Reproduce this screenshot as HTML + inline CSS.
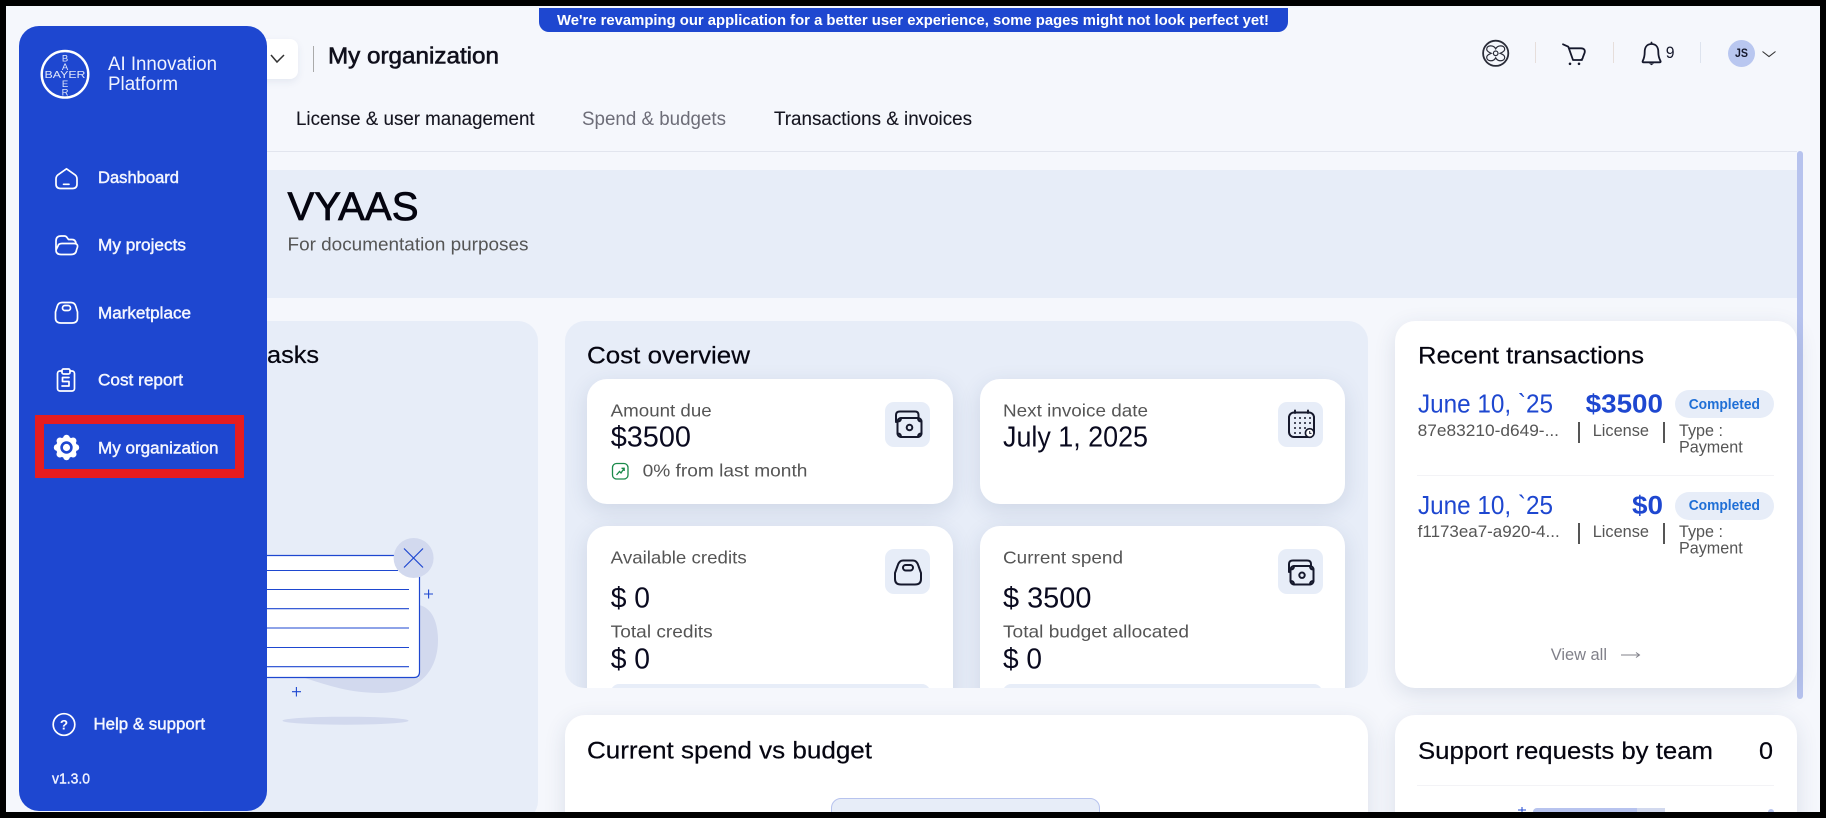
<!DOCTYPE html>
<html lang="en"><head><meta charset="utf-8"><title>My organization</title>
<style>
html,body{margin:0;padding:0;background:#000;overflow:hidden}
#p{position:relative;width:1826px;height:818px;background:#f5f7fc;overflow:hidden;font-family:"Liberation Sans",sans-serif}
#p div{position:absolute;box-sizing:border-box}
.w{background:#fff;border-radius:20px;box-shadow:0 6px 22px rgba(40,60,110,.13)}
.l{background:#e7edf8}
.ib{background:#e7edf8;border-radius:9px;width:45px;height:45px}
svg{position:absolute;left:0;top:0}
text{font-family:"Liberation Sans",sans-serif}
.nav{font-size:17px;fill:#f4f6ff;stroke:#f4f6ff;stroke-width:.45}
.h{font-size:24.2px;fill:#050510;stroke:#050510;stroke-width:.2}
.lab{font-size:17.5px;fill:#555}
.val{font-size:29px;fill:#0a0a1f}
.blu{font-size:25.8px;fill:#1e47d0}
.sm{font-size:16.5px;fill:#555}
.tab{font-size:19px;fill:#151520;stroke:#151520;stroke-width:.12}
.ic{fill:none;stroke:#15182c;stroke-width:2;stroke-linecap:round;stroke-linejoin:round}
.sb{fill:none;stroke:#fff;stroke-width:1.7;stroke-linecap:round;stroke-linejoin:round}
</style></head><body>
<div id="p">
 <div style="left:539px;top:8px;width:749px;height:24px;background:#1e47d0;border-radius:0 0 10px 10px"></div>
 <div style="left:230px;top:39px;width:68px;height:40px;background:#fff;border-radius:8px;box-shadow:0 3px 8px rgba(40,60,110,.08)"></div>
 <div style="left:313px;top:46px;width:1px;height:26px;background:#aaa"></div>
 <div style="left:267px;top:151px;width:1530px;height:1px;background:#e2e5ee"></div>
 <div class="l" style="left:267px;top:170px;width:1530px;height:128px"></div>
 <div style="left:1797px;top:151px;width:6px;height:548px;background:#b7c3ee;border-radius:3px"></div>
 <div class="l" style="left:200px;top:321px;width:338px;height:500px;border-radius:20px"></div>

 <div class="l" style="left:565px;top:321px;width:803px;height:367px;border-radius:20px;overflow:hidden">
  <div class="w" style="left:22px;top:58px;width:366px;height:125px"></div>
  <div class="w" style="left:415px;top:58px;width:365px;height:125px"></div>
  <div class="w" style="left:22px;top:205px;width:366px;height:200px"></div>
  <div class="w" style="left:415px;top:205px;width:365px;height:200px"></div>
  <div class="ib" style="left:320px;top:81px"></div>
  <div class="ib" style="left:713px;top:81px"></div>
  <div class="ib" style="left:320px;top:228px"></div>
  <div class="ib" style="left:713px;top:228px"></div>
  <div class="l" style="left:46px;top:363px;width:319px;height:20px;border-radius:8px 8px 0 0"></div>
  <div class="l" style="left:438px;top:363px;width:319px;height:20px;border-radius:8px 8px 0 0"></div>
 </div>

 <div class="w" style="left:1395px;top:321px;width:402px;height:367px"></div>
 <div class="w" style="left:565px;top:715px;width:803px;height:130px"></div>
 <div class="w" style="left:1395px;top:715px;width:402px;height:130px"></div>
 <div class="l" style="left:831px;top:798px;width:269px;height:30px;border:1px solid #b7c3ee;border-radius:10px"></div>
 <div style="left:1417px;top:475px;width:357px;height:1px;background:#f3f3f6"></div>
 <div style="left:1417px;top:785px;width:357px;height:1px;background:#f3f3f6"></div>
 <div style="left:1533px;top:808px;width:104px;height:5px;background:#b7c3ee;border-radius:4px 0 0 0"></div>
 <div style="left:1637px;top:808px;width:28px;height:5px;background:#d2d9ee"></div>
 <div style="left:1675px;top:390px;width:99px;height:28px;background:#e7edf8;border-radius:14px"></div>
 <div style="left:1675px;top:492px;width:99px;height:28px;background:#e7edf8;border-radius:14px"></div>
 <div style="left:1578px;top:422px;width:2px;height:21px;background:#555"></div>
 <div style="left:1663px;top:422px;width:2px;height:21px;background:#555"></div>
 <div style="left:1578px;top:523px;width:2px;height:21px;background:#555"></div>
 <div style="left:1663px;top:523px;width:2px;height:21px;background:#555"></div>
 <div style="left:1535px;top:42px;width:1px;height:21px;background:#e6dedb"></div>
 <div style="left:1613px;top:42px;width:1px;height:21px;background:#e6dedb"></div>
 <div style="left:1700px;top:42px;width:1px;height:21px;background:#dde3ee"></div>
 <div style="left:1728px;top:40px;width:27px;height:27px;border-radius:50%;background:#b9c7f0"></div>

 <!-- illustration -->
 <svg width="1826" height="818" viewBox="0 0 1826 818">
  <path d="M419 605C433 608 438 624 438 640C438 670 420 693 380 693C350 693 330 686 305 678H419Z" fill="#d2d9ee"/>
  <ellipse cx="345.5" cy="720.7" rx="63" ry="4" fill="#d2d9ee"/>
  <path d="M230 555.5H414Q419.5 555.5 419.5 561V672Q419.5 677.5 414 677.5H230Z" fill="#fff" stroke="#1e47d0" stroke-width="1.2"/>
  <g stroke="#1e47d0" stroke-width="1.1">
   <path d="M230 570.5H398M230 589.5H409M230 608.7H409M230 628H409M230 647.5H409M230 666.7H409"/>
   <path d="M424 594H433M428.6 589.5V598.5M292 691.7H301M296.4 687V696.5"/>
  </g>
  <circle cx="413.6" cy="558" r="20" fill="#d2d9ee"/>
  <path d="M404 548.5L423 567.5M423 548.5L404 567.5" stroke="#1e47d0" stroke-width="1.2"/>
 </svg>

 <div style="left:19px;top:26px;width:248px;height:785px;background:#1e47d0;border-radius:20px"></div>
 <div style="left:35px;top:415px;width:209px;height:63px;border:9px solid #e51c1f"></div>

 <svg width="1826" height="818" viewBox="0 0 1826 818">
  <!-- banner -->
  <text x="557" y="25" textLength="712" lengthAdjust="spacingAndGlyphs" font-size="15" font-weight="700" fill="#fff">We're revamping our application for a better user experience, some pages might not look perfect yet!</text>
  <!-- top -->
  <path d="M271 55L277 62L284 55" fill="none" stroke="#333" stroke-width="1.5"/>
  <text x="328" y="63.3" textLength="171" lengthAdjust="spacingAndGlyphs" font-size="23" fill="#10101c" stroke="#10101c" stroke-width=".6">My organization</text>
  <text x="296" y="125" textLength="238.6" lengthAdjust="spacingAndGlyphs" class="tab">License &amp; user management</text>
  <text x="582" y="125" textLength="144" lengthAdjust="spacingAndGlyphs" class="tab" style="fill:#6d6d78;stroke:none">Spend &amp; budgets</text>
  <text x="774" y="125" textLength="198" lengthAdjust="spacingAndGlyphs" class="tab">Transactions &amp; invoices</text>
  <!-- top-right icons -->
  <g fill="none" stroke="#2a2c38">
   <circle cx="1495.7" cy="53.3" r="12.6" stroke-width="1.8"/>
   <circle cx="1495.7" cy="53.3" r="2.3" stroke-width="1.2"/>
   <path d="M1495.7 48.8c2-4 9-4 9 .5c0 2-2 3-4.5 4c2.5 1 4.5 2 4.5 4c0 4.5-7 4.5-9 .5c-2 4-9 4-9-.5c0-2 2-3 4.5-4c-2.5-1-4.5-2-4.5-4c0-4.5 7-4.5 9-.5z" stroke-width="1.2"/>
  </g>
  <path class="ic" style="stroke-width:1.8" d="M1563 44.3L1568.3 46.7L1573 60H1582M1569.3 48.3H1581Q1585.5 48.5 1584.7 52.5L1583 57Q1582.5 60 1580 60"/>
  <circle cx="1570" cy="63.8" r="1.3" fill="#15182c"/><circle cx="1579" cy="63.8" r="1.3" fill="#15182c"/>
  <path class="ic" style="stroke-width:1.8" d="M1651.5 44C1646 44 1644.7 48.5 1644.7 52C1644.7 57 1643.5 59.5 1642.7 61Q1642.3 62.3 1643.5 62.3H1659.8Q1661 62.3 1660.5 61C1659.7 59.5 1658.3 57 1658.3 52C1658.3 48.5 1657 44 1651.5 44ZM1651.5 42.5V44"/>
  <path d="M1649 63.5H1654L1651.5 65.2Z" fill="#15182c"/>
  <text x="1665.7" y="58" textLength="8.8" lengthAdjust="spacingAndGlyphs" font-size="16.5" fill="#15182c">9</text>
  <text x="1735" y="57.2" textLength="13" lengthAdjust="spacingAndGlyphs" font-size="11.5" font-weight="700" fill="#15182c">JS</text>
  <path d="M1762.5 51.5L1769 56.5L1775.5 51.5" fill="none" stroke="#333" stroke-width="1.1"/>
  <!-- hero -->
  <text x="287.5" y="220" textLength="131" lengthAdjust="spacingAndGlyphs" font-size="40" fill="#050510" stroke="#050510" stroke-width=".8">VYAAS</text>
  <text x="287.5" y="250.7" textLength="241" lengthAdjust="spacingAndGlyphs" font-size="18" fill="#555">For documentation purposes</text>
  <text x="267" y="363" textLength="52" lengthAdjust="spacingAndGlyphs" class="h">asks</text>
  <!-- cost overview -->
  <text x="587" y="363.3" textLength="163" lengthAdjust="spacingAndGlyphs" class="h">Cost overview</text>
  <text x="610.7" y="416.7" textLength="101" lengthAdjust="spacingAndGlyphs" class="lab">Amount due</text>
  <text x="610.7" y="446.7" textLength="80.3" lengthAdjust="spacingAndGlyphs" class="val">$3500</text>
  <text x="642.6" y="476.7" textLength="164.8" lengthAdjust="spacingAndGlyphs" class="lab">0% from last month</text>
  <rect x="612.5" y="463.5" width="15.5" height="15.5" rx="4" fill="none" stroke="#1a8a4a" stroke-width="1.3"/>
  <path d="M616.5 475L619.5 471.5L621 473L624 468.5M621.5 468.3H624.2V471" fill="none" stroke="#1a8a4a" stroke-width="1.3"/>
  <text x="1003" y="416.7" textLength="145" lengthAdjust="spacingAndGlyphs" class="lab">Next invoice date</text>
  <text x="1003" y="446.7" textLength="145" lengthAdjust="spacingAndGlyphs" class="val">July 1, 2025</text>
  <text x="610.7" y="563.3" textLength="136" lengthAdjust="spacingAndGlyphs" class="lab">Available credits</text>
  <text x="610.7" y="607.3" textLength="39.3" lengthAdjust="spacingAndGlyphs" class="val">$ 0</text>
  <text x="610.7" y="637.3" textLength="102" lengthAdjust="spacingAndGlyphs" class="lab">Total credits</text>
  <text x="610.7" y="668.3" textLength="39.3" lengthAdjust="spacingAndGlyphs" class="val">$ 0</text>
  <text x="1003" y="563.3" textLength="120" lengthAdjust="spacingAndGlyphs" class="lab">Current spend</text>
  <text x="1003" y="607.3" textLength="88.4" lengthAdjust="spacingAndGlyphs" class="val">$ 3500</text>
  <text x="1003" y="637.3" textLength="186" lengthAdjust="spacingAndGlyphs" class="lab">Total budget allocated</text>
  <text x="1003" y="668.3" textLength="39" lengthAdjust="spacingAndGlyphs" class="val">$ 0</text>
  <!-- card icons -->
  <g class="ic">
   <path d="M896 422V415Q896 411.5 900 411.5H915Q918.5 411.5 918.5 415V418"/>
   <rect x="897.5" y="418" width="24" height="19" rx="3.5"/>
   <circle cx="909.5" cy="427.5" r="2.8"/>
   <path d="M897.5 421.5Q901 421.5 901 418M918 418Q918 421.5 921.5 421.5M897.5 433.5Q901 433.5 901 437M921.5 433.5Q918 433.5 918 437"/>
  </g>
  <g class="ic">
   <path d="M1289 572V564Q1289 560.5 1293 560.5H1307Q1311 560.5 1311 564V566"/>
   <rect x="1290.5" y="566" width="23" height="18.5" rx="3.5"/>
   <circle cx="1302" cy="575.2" r="2.7"/>
   <path d="M1290.5 569.5Q1294 569.5 1294 566M1310 566Q1310 569.5 1313.5 569.5M1290.5 581Q1294 581 1294 584.5M1313.5 581Q1310 581 1310 584.5"/>
  </g>
  <g class="ic">
   <rect x="1289" y="412.5" width="25" height="24.5" rx="5"/>
   <path d="M1295 410.5V413M1308 410.5V413"/>
  </g>
  <g fill="#15182c">
   <circle cx="1295" cy="418" r="1"/><circle cx="1300" cy="418" r="1"/><circle cx="1305" cy="418" r="1"/><circle cx="1310" cy="418" r="1"/>
   <circle cx="1295" cy="423" r="1"/><circle cx="1300" cy="423" r="1"/><circle cx="1305" cy="423" r="1"/><circle cx="1310" cy="423" r="1"/>
   <circle cx="1295" cy="428" r="1"/><circle cx="1300" cy="428" r="1"/><circle cx="1305" cy="428" r="1"/>
   <circle cx="1295" cy="433" r="1"/><circle cx="1300" cy="433" r="1"/>
  </g>
  <circle cx="1309.7" cy="433" r="4.3" fill="#fff" stroke="#15182c" stroke-width="1.7"/>
  <path d="M1309.7 431V433.4H1311.5" fill="none" stroke="#15182c" stroke-width="1"/>
  <g class="ic">
   <path d="M903 560.5H913Q917 560.5 918.5 566L921 573V579Q921 584.5 915 584.5H901Q895 584.5 895 579V573L897.5 566Q899 560.5 903 560.5Z"/>
   <rect x="903" y="565" width="10" height="5.5" rx="2.7"/>
  </g>
  <!-- lower titles -->
  <text x="587" y="758.3" textLength="285" lengthAdjust="spacingAndGlyphs" class="h">Current spend vs budget</text>
  <text x="1418" y="759" textLength="295" lengthAdjust="spacingAndGlyphs" class="h">Support requests by team</text>
  <text x="1759" y="759" textLength="14" lengthAdjust="spacingAndGlyphs" class="h">0</text>
  <path d="M1518 810H1526M1522 807V812" stroke="#1e47d0"/>
  <circle cx="1771" cy="812" r="3" fill="#b7c3ee"/>
  <!-- recent transactions -->
  <text x="1418" y="363.3" textLength="226" lengthAdjust="spacingAndGlyphs" class="h">Recent transactions</text>
  <text x="1418" y="412.7" textLength="135" lengthAdjust="spacingAndGlyphs" class="blu">June 10, `25</text>
  <text x="1585.7" y="412.7" textLength="77.3" lengthAdjust="spacingAndGlyphs" class="blu" font-weight="700">$3500</text>
  <text x="1688.7" y="409" textLength="71.3" lengthAdjust="spacingAndGlyphs" font-size="14.5" font-weight="700" fill="#1f6fd6">Completed</text>
  <text x="1417.7" y="436" textLength="141.3" lengthAdjust="spacingAndGlyphs" class="sm">87e83210-d649-...</text>
  <text x="1592.7" y="436" textLength="56.3" lengthAdjust="spacingAndGlyphs" class="sm">License</text>
  <text x="1679" y="436" textLength="44" lengthAdjust="spacingAndGlyphs" class="sm">Type :</text>
  <text x="1679" y="452.7" textLength="63.7" lengthAdjust="spacingAndGlyphs" class="sm">Payment</text>
  <text x="1418" y="514" textLength="135" lengthAdjust="spacingAndGlyphs" class="blu">June 10, `25</text>
  <text x="1632" y="514" textLength="31" lengthAdjust="spacingAndGlyphs" class="blu" font-weight="700">$0</text>
  <text x="1688.7" y="510" textLength="71.3" lengthAdjust="spacingAndGlyphs" font-size="14.5" font-weight="700" fill="#1f6fd6">Completed</text>
  <text x="1417.7" y="537" textLength="142" lengthAdjust="spacingAndGlyphs" class="sm">f1173ea7-a920-4...</text>
  <text x="1592.7" y="537" textLength="56.3" lengthAdjust="spacingAndGlyphs" class="sm">License</text>
  <text x="1679" y="537" textLength="44" lengthAdjust="spacingAndGlyphs" class="sm">Type :</text>
  <text x="1679" y="553.3" textLength="63.7" lengthAdjust="spacingAndGlyphs" class="sm">Payment</text>
  <text x="1550.7" y="660" textLength="56.3" lengthAdjust="spacingAndGlyphs" font-size="16.5" fill="#808089">View all</text>
  <path d="M1621 655H1639.5M1636 652.5L1639.5 655L1636 657.5" fill="none" stroke="#808089" stroke-width="1"/>
  <!-- sidebar content -->
  <circle cx="65" cy="74.3" r="23.3" fill="none" stroke="#fff" stroke-width="2.4"/>
  <g fill="#dfe6fa" font-size="9.5" text-anchor="middle">
   <text x="65" y="78" font-size="10" textLength="41" lengthAdjust="spacingAndGlyphs">BAYER</text>
   <text x="65" y="61.5">B</text><text x="65" y="70">A</text><text x="65" y="87">E</text><text x="65" y="95.5">R</text>
  </g>
  <text x="108" y="70" textLength="109" lengthAdjust="spacingAndGlyphs" font-size="19" fill="#f0f3ff">AI Innovation</text>
  <text x="108" y="90" textLength="70" lengthAdjust="spacingAndGlyphs" font-size="19" fill="#f0f3ff">Platform</text>
  <text x="98" y="183" textLength="81" lengthAdjust="spacingAndGlyphs" class="nav">Dashboard</text>
  <text x="98" y="250.7" textLength="88" lengthAdjust="spacingAndGlyphs" class="nav">My projects</text>
  <text x="98" y="318.3" textLength="93" lengthAdjust="spacingAndGlyphs" class="nav">Marketplace</text>
  <text x="98" y="385.3" textLength="85" lengthAdjust="spacingAndGlyphs" class="nav">Cost report</text>
  <text x="98" y="453.3" textLength="120.5" lengthAdjust="spacingAndGlyphs" class="nav">My organization</text>
  <text x="93.5" y="729.3" textLength="111.5" lengthAdjust="spacingAndGlyphs" class="nav">Help &amp; support</text>
  <text x="52" y="783.3" textLength="38" lengthAdjust="spacingAndGlyphs" font-size="15" fill="#eef1ff" stroke="#eef1ff" stroke-width=".4">v1.3.0</text>
  <path class="sb" d="M66.5 168.8L75 174.8Q77 176.3 77 179V184Q77 188.5 72.5 188.5H60.5Q56 188.5 56 184V179Q56 176.3 58 174.8ZM63.5 184.3H69"/>
  <path class="sb" d="M61 254.5H71Q76 254.5 76.5 250L77.5 247Q78 243.5 74 243.5H62Q58.5 243.5 58 246L56 250V241Q56 236 61 236H64.5Q66 236 67 237.5L68.5 239.5H72Q75.5 239.5 76 243.5M56 250Q56 254.5 61 254.5"/>
  <path class="sb" d="M62 302.5H71Q75 302.5 76 307L77.5 312V318Q77.5 323 72 323H61Q55.5 323 55.5 318V312L57 307Q58 302.5 62 302.5Z"/>
  <rect class="sb" x="62.5" y="305.5" width="8" height="5" rx="2.4"/>
  <rect class="sb" x="57.5" y="371" width="17" height="20" rx="2.5"/>
  <rect x="62" y="369" width="8" height="5" rx="1.5" fill="#1e47d0" stroke="#fff" stroke-width="1.7"/>
  <path class="sb" d="M69 377.5H62.5V381.5H69V386H62"/>
  <g fill="#fff">
   <circle cx="66.5" cy="447.5" r="10.5"/>
   <circle cx="66.5" cy="438.2" r="3.4"/><circle cx="66.5" cy="456.8" r="3.4"/>
   <circle cx="57.2" cy="447.5" r="3.4"/><circle cx="75.8" cy="447.5" r="3.4"/>
   <circle cx="59.9" cy="440.9" r="3.4"/><circle cx="73.1" cy="440.9" r="3.4"/>
   <circle cx="59.9" cy="454.1" r="3.4"/><circle cx="73.1" cy="454.1" r="3.4"/>
  </g>
  <circle cx="66.5" cy="447.5" r="6.2" fill="#1e47d0"/><circle cx="66.5" cy="447.5" r="3.6" fill="#fff"/>
  <circle cx="64" cy="724.5" r="10.8" class="sb"/>
  <text x="64" y="729.5" text-anchor="middle" font-size="13.5" font-weight="700" fill="#fff">?</text>
 </svg>
 <div style="left:0;top:0;width:1826px;height:818px;border:6px solid #000"></div>
</div>
</body></html>
